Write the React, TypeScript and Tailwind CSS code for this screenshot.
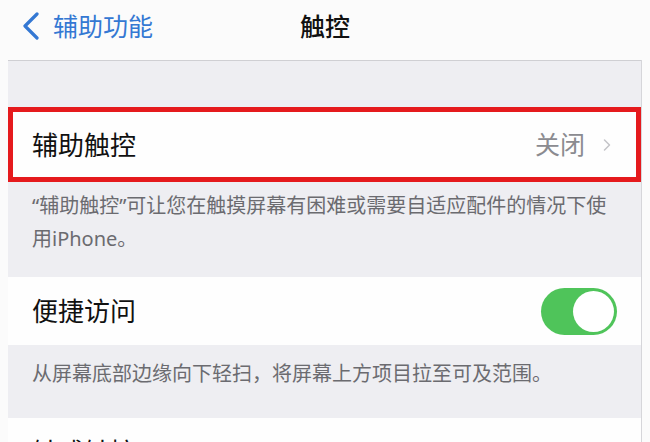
import { ChevronRight } from "lucide-react";

const font = { fontFamily: '"Noto Sans", "Noto Sans CJK SC", sans-serif' };

function Row({ label, highlight, children }: { label: string; highlight?: boolean; children?: React.ReactNode }) {
  return <div className={`flex items-center justify-between bg-[#fefefe] ${highlight ? "h-[75px] border-[5px] border-[#e51a1d] pl-[19px] pr-[19px]" : "h-[68px] pl-6 pr-6"}`}>
    <span className="text-[26px] leading-none text-[#111]">{label}</span>
    {children}
  </div>
}

function Toggle() {
  return <div className="flex h-[47px] w-[76px] items-center justify-end rounded-full bg-[#4fc45a] p-[3px]">
    <div className="size-[41px] rounded-full bg-white" />
  </div>
}

export default function App() {
  return <div className="h-[442px] w-[650px] overflow-hidden bg-[#fbfbfb]" style={font}>
    <div className="relative flex h-[60px] items-center pb-[8px] pl-[22px]">
      <div className="flex items-center gap-[14px] text-[#3478d3]">
        <svg width="17" height="28" viewBox="0 0 17 28" fill="none" stroke="currentColor" strokeWidth="3.2" strokeLinecap="round" strokeLinejoin="round">
          <polyline points="15,2 3,14 15,26" />
        </svg>
        <span className="text-[25px] leading-none">辅助功能</span>
      </div>
      <span className="absolute left-[300px] top-[14px] text-[25px] font-medium leading-none text-[#111]">触控</span>
    </div>
    <div className="ml-2 w-[634px] border-r border-[#d6d6da]">
      <div className="h-[47px] border-t border-[#cfcfd3] bg-[#eeeef2]" />
      <Row label="辅助触控" highlight>
        <div className="flex items-center gap-3 text-[#8b8b90]">
          <span className="text-[25px] leading-none">关闭</span>
          <ChevronRight className="size-[20px] text-[#c4c4c8]" strokeWidth={1.8} />
        </div>
      </Row>
      <div className="h-[95px] bg-[#eeeef2] px-6 pt-[7px] text-[20px] leading-[33px] text-[#6b6b70]">
        <div className="whitespace-nowrap">“辅助触控”可让您在触摸屏幕有困难或需要自适应配件的情况下使</div>
        <div className="whitespace-nowrap">用iPhone。</div>
      </div>
      <Row label="便捷访问">
        <Toggle />
      </Row>
      <div className="h-[73px] bg-[#eeeef2] px-6 pt-[12px] text-[20px] leading-[33px] text-[#6b6b70]">
        <div className="whitespace-nowrap">从屏幕底部边缘向下轻扫，将屏幕上方项目拉至可及范围。</div>
      </div>
      <Row label="触感触控" />
    </div>
  </div>
}
